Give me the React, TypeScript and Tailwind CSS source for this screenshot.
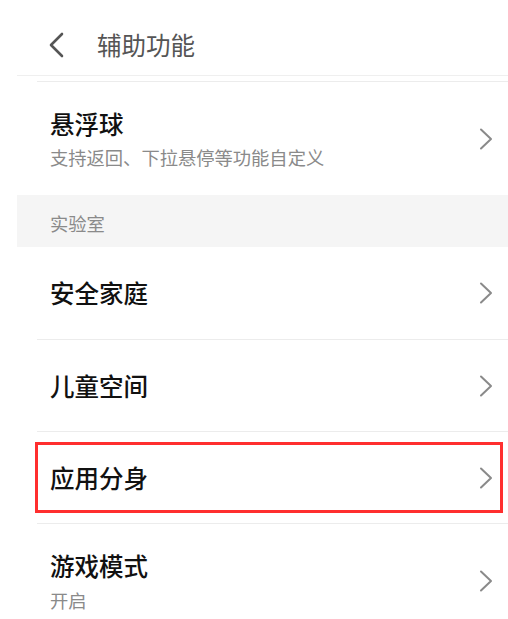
import React from "react";

const Chevron = () => (
  <svg width="14" height="22" viewBox="0 0 14 22" fill="none">
    <path d="M2 1.5 L12 11 L2 20.5" stroke="#8a8a8a" strokeWidth="2" strokeLinecap="round" strokeLinejoin="round" />
  </svg>
);

const Divider = () => <div className="ml-[20px] h-px bg-[#ececec]" />;

export default function App() {
  return (
    <div className="w-[508px] h-[619px] overflow-hidden bg-white" style={{ fontFamily: '"Noto Sans CJK SC", "Noto Sans", sans-serif' }}>
      {/* header */}
      <div className="h-[75px] flex items-center pt-[15px] pl-[48px]">
        <svg width="16" height="26" viewBox="0 0 16 26" fill="none">
          <path d="M14 2 L3 13 L14 24" stroke="#555555" strokeWidth="2.6" strokeLinecap="round" strokeLinejoin="round" />
        </svg>
        <span className="ml-[33px] text-[24.5px] leading-[32px] text-[#555555]">辅助功能</span>
      </div>
      <div className="ml-[17px]">
        <div className="h-px bg-[#efefef]" />
        <div className="h-[5px]" />
        <Divider />
        {/* 悬浮球 */}
        <div className="h-[113px] flex items-center justify-between pl-[33px] pr-[15px]">
          <div className="flex flex-col">
            <span className="text-[24.5px] leading-[32px] font-medium text-[#111111]">悬浮球</span>
            <span className="mt-[5px] text-[18.3px] leading-[24px] text-[#8a8a8a]">支持返回、下拉悬停等功能自定义</span>
          </div>
          <Chevron />
        </div>
        {/* section band */}
        <div className="h-[52px] bg-[#f5f5f5] pl-[33px] pt-[16px]">
          <span className="text-[18.3px] leading-[24px] text-[#8a8a8a]">实验室</span>
        </div>
        {/* rows */}
        <div className="h-[92px] flex items-center justify-between pl-[33px] pr-[15px]">
          <span className="text-[24.5px] leading-[32px] font-medium text-[#111111]">安全家庭</span>
          <Chevron />
        </div>
        <Divider />
        <div className="h-[91px] flex items-center justify-between pl-[33px] pr-[15px]">
          <span className="text-[24.5px] leading-[32px] font-medium text-[#111111]">儿童空间</span>
          <Chevron />
        </div>
        <Divider />
        <div className="relative h-[91px] flex items-center justify-between pl-[33px] pr-[15px]">
          <span className="text-[24.5px] leading-[32px] font-medium text-[#111111]">应用分身</span>
          <Chevron />
          <div className="absolute left-[18px] right-[5px] top-[10px] bottom-[10px] border-[3px] border-[#ff2f2f]" />
        </div>
        <Divider />
        <div className="h-[113px] flex items-center justify-between pl-[33px] pr-[15px]">
          <div className="flex flex-col">
            <span className="text-[24.5px] leading-[32px] font-medium text-[#111111]">游戏模式</span>
            <span className="mt-[6px] text-[18.3px] leading-[24px] text-[#8a8a8a]">开启</span>
          </div>
          <Chevron />
        </div>
      </div>
    </div>
  );
}
